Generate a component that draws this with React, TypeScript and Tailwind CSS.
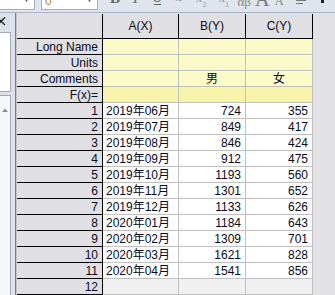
import React from "react";

const rows: [string, string, string][] = [
  ["2019年06月", "724", "355"],
  ["2019年07月", "849", "417"],
  ["2019年08月", "846", "424"],
  ["2019年09月", "912", "475"],
  ["2019年10月", "1193", "560"],
  ["2019年11月", "1301", "652"],
  ["2019年12月", "1133", "626"],
  ["2020年01月", "1184", "643"],
  ["2020年02月", "1309", "701"],
  ["2020年03月", "1621", "828"],
  ["2020年04月", "1541", "856"],
];

const labels = ["Long Name", "Units", "Comments", "F(x)="];

function RowHead({ children }: { children?: React.ReactNode }) {
  return (
    <div className="h-[16px] bg-[#e0dfe3] border-r border-b border-black text-right pr-[4px] leading-[17px] overflow-hidden whitespace-nowrap">
      {children}
    </div>
  );
}

function Cell({
  children,
  bg,
  align,
}: {
  children?: React.ReactNode;
  bg: string;
  align: string;
}) {
  return (
    <div
      className={`h-[16px] border-r border-b border-[#c0c0c0] leading-[17px] overflow-hidden whitespace-nowrap ${bg} ${align}`}
    >
      {children}
    </div>
  );
}

function Toolbar() {
  return (
    <div className="h-[12px] bg-[#dfe4ee] overflow-hidden flex items-start relative">
      <div className="w-[35px] h-[10px] bg-white border-r border-b border-[#a6adb9] flex justify-end pr-[3px]">
        <span className="text-[9px] leading-none mt-[-5px] text-[#555]">▼</span>
      </div>
      <div className="ml-[6px] w-[57px] h-[10px] bg-white border border-t-0 border-[#a6adb9] flex justify-between px-[3px]">
        <span className="text-[12px] leading-[12px] mt-[-5px] text-[#c08030]">0</span>
        <span className="text-[9px] leading-none mt-[-5px] text-[#555]">▼</span>
      </div>
      <span className="ml-[12px] font-['Liberation_Serif',serif] font-bold text-[15px] leading-[15px] mt-[-9px] text-[#666]">B</span>
      <span className="ml-[13px] font-['Liberation_Serif',serif] italic text-[15px] leading-[15px] mt-[-9px] text-[#666]">I</span>
      <span className="ml-[14px] flex flex-col items-center mt-[-9px]">
        <span className="font-['Liberation_Serif',serif] text-[14px] leading-[13px] text-[#666]">U</span>
        <span className="w-[7px] h-[1px] bg-[#666]" />
      </span>
      <span className="ml-[13px] font-['Liberation_Serif',serif] text-[13px] leading-[13px] mt-[-10px] text-[#888]">x</span>
      <span className="ml-[14px] flex items-start mt-[-9px]">
        <span className="font-['Liberation_Serif',serif] text-[13px] leading-[13px] text-[#999]">x</span>
        <span className="text-[8px] leading-none mt-[10px] text-[#aaa]">2</span>
      </span>
      <span className="ml-[12px] flex items-start mt-[-9px]">
        <span className="font-['Liberation_Serif',serif] text-[13px] leading-[13px] text-[#999]">x</span>
        <span className="text-[8px] leading-none mt-[10px] text-[#aaa]">1</span>
      </span>
      <span className="ml-[8px] font-['Liberation_Serif',serif] text-[13px] leading-[13px] mt-[-5px] text-[#888]">αβ</span>
      <span className="ml-[4px] font-['Liberation_Serif',serif] text-[20px] leading-[20px] mt-[-11px] text-[#777]">A</span>
      <span className="ml-[5px] font-['Liberation_Serif',serif] text-[13px] leading-[13px] mt-[-6px] text-[#888]">A</span>
      <span className="ml-[12px] flex flex-col gap-[2px] mt-[0px]">
        <span className="w-[10px] h-[1px] bg-[#777]" />
        <span className="w-[7px] h-[1px] bg-[#777]" />
      </span>
      <span className="ml-[15px] w-[3px] h-[3px] bg-[#222]" />
    </div>
  );
}

function LeftPanel() {
  return (
    <div className="w-[17px] h-full flex">
      <div className="w-[15px] h-full bg-[#dce1ec] flex flex-col">
        <div className="h-[19px] flex items-start pt-[4px]">
          <svg width="6" height="9" viewBox="0 0 6 9" className="overflow-visible">
            <path d="M-3 0.5 L5 8 M5 0.5 L-3 8" stroke="#222" strokeWidth="1.4" />
          </svg>
        </div>
        <div className="w-[11px] h-[60px] bg-white border-t border-r border-b border-[#a3a9b4]" />
        <div className="h-[3px]" />
        <div className="w-[11px] flex-1 bg-[#f6f7fa] border-t border-r border-[#a3a9b4] flex justify-center pt-[12px]">
          <svg width="6" height="4" viewBox="0 0 6 4" className="ml-[-1px]">
            <path d="M0 4 L3 0.5 L6 4 Z" fill="#8a8a8a" />
          </svg>
        </div>
      </div>
      <div className="w-[1px] h-full bg-[#7d7d7d]" />
      <div className="w-[1px] h-full bg-[#c4c4c8]" />
    </div>
  );
}

export default function App() {
  return (
    <div className="w-[335px] h-[295px] overflow-hidden bg-[#e2e1e6] flex flex-col font-['Liberation_Sans','Noto_Sans_CJK_SC',sans-serif] text-[12px] text-[#0a0a1e]">
      <Toolbar />
      <div className="h-[1px] bg-[#a9b3c6]" />
      <div className="flex flex-1 min-h-0">
        <LeftPanel />
        <div className="flex flex-col">
          <div className="h-[1px] bg-[#e2e1e6]" />
          <div className="grid grid-cols-[86px_76px_67px_67px]">
            <div className="h-[25px] bg-[#e0dfe3] border-r border-b border-black" />
            {["A(X)", "B(Y)", "C(Y)"].map((h) => (
              <div
                key={h}
                className="h-[25px] bg-[#e0dfe3] border-r border-b border-black text-center leading-[24px]"
              >
                {h}
              </div>
            ))}
            {labels.map((l, i) => {
              const bg = i === 3 ? "bg-[#f7f3ab]" : "bg-[#fbfac8]";
              return (
                <React.Fragment key={l}>
                  <RowHead>{l}</RowHead>
                  <Cell bg={bg} align="text-center" />
                  <Cell bg={bg} align="text-center">
                    {i === 2 ? "男" : ""}
                  </Cell>
                  <Cell bg={bg} align="text-center">
                    {i === 2 ? "女" : ""}
                  </Cell>
                </React.Fragment>
              );
            })}
            {rows.map((r, i) => (
              <React.Fragment key={i}>
                <RowHead>{i + 1}</RowHead>
                <Cell bg="bg-white" align="text-left pl-[3px]">
                  {r[0]}
                </Cell>
                <Cell bg="bg-white" align="text-right pr-[4px]">
                  {r[1]}
                </Cell>
                <Cell bg="bg-white" align="text-right pr-[4px]">
                  {r[2]}
                </Cell>
              </React.Fragment>
            ))}
            <RowHead>12</RowHead>
            <Cell bg="bg-[#f0f0f0]" align="" />
            <Cell bg="bg-[#f0f0f0]" align="" />
            <Cell bg="bg-[#f0f0f0]" align="" />
          </div>
        </div>
        <div className="flex-1" />
      </div>
    </div>
  );
}
